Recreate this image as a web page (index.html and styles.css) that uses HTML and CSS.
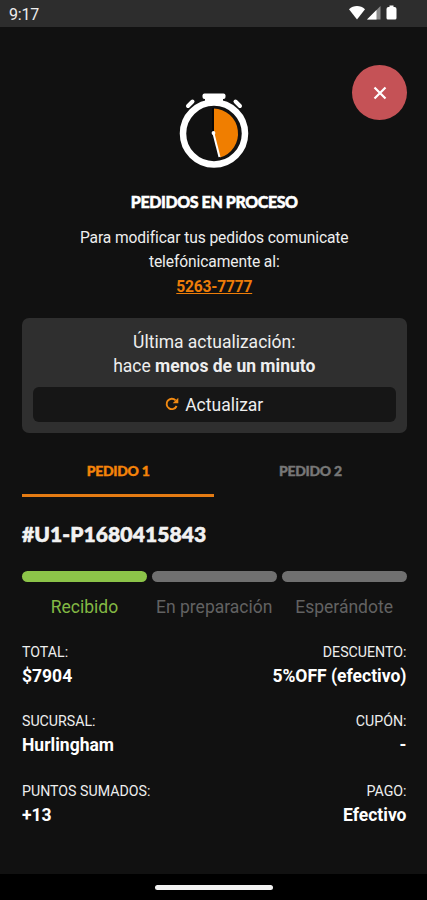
FILE: index.html
```html
<!DOCTYPE html>
<html lang="es">
<head>
<meta charset="utf-8">
<meta name="viewport" content="width=device-width, initial-scale=1">
<title>Pedidos en proceso</title>
<link rel="stylesheet" href="styles.css">
</head>
<body>
<div class="screen">
  <header class="status">
    <span class="clock">9:17</span>
    <svg class="status-icons" width="52" height="18" viewBox="0 0 52 18" aria-hidden="true">
      <path d="M1 5.200C5.500 1 12.500 1 17 5.200L9 15.500Z" fill="#fff"/>
      <path d="M19 15.500L32.500 2V15.500Z" fill="#8b8b8b"/>
      <path d="M19 15.500L28.500 6V15.500Z" fill="#fff"/>
      <path d="M41.500 1.500h4v1.500h1a2 2 0 0 1 2 2v9a1.500 1.500 0 0 1-1.500 1.500h-7a1.500 1.500 0 0 1-1.500-1.500v-9a2 2 0 0 1 2-2h1z" fill="#fff"/>
    </svg>
  </header>
  <main class="content">
    <button class="close" aria-label="Cerrar">
      <svg width="14" height="14" viewBox="0 0 14 14"><path d="M1.500 1.500L12.500 12.500M12.500 1.500L1.500 12.500" stroke="#fff" stroke-width="2.200"/></svg>
    </button>
    <svg class="timer" width="72" height="76" viewBox="0 0 72 76" aria-hidden="true">
      <rect x="24.500" y="1.500" width="23" height="5.500" rx="2" fill="#fff"/>
      <path d="M27 5h18v5H27z" fill="#fff"/>
      <path d="M10 14L14.500 9.500M62 14L57.500 9.500" stroke="#fff" stroke-width="4" stroke-linecap="round"/>
      <circle cx="36" cy="41.500" r="31" fill="#111" stroke="#fff" stroke-width="6.500"/>
      <path d="M35.500 41.500V16.500A25 25 0 0 1 42 65.500Z" fill="#f07e00"/>
      <path d="M35 41V16" stroke="#050505" stroke-width="2"/>
      <path d="M35.500 41.500L41.500 65" stroke="#fff" stroke-width="2"/>
      <circle cx="35.500" cy="41" r="1.900" fill="#fff"/>
    </svg>
    <h1 class="title">PEDIDOS EN PROCESO</h1>
    <p class="help">Para modificar tus pedidos comunicate<br>telefónicamente al:<br><a class="phone" href="tel:52637777">5263-7777</a></p>
    <section class="update">
      <p class="updated">Última actualización:<br>hace <b>menos de un minuto</b></p>
      <button class="refresh">
        <svg width="14" height="14" viewBox="0 0 14 14"><path d="M11.600 9A5.200 5.200 0 1 1 10.600 3.300" fill="none" stroke="#f28a12" stroke-width="1.900"/><path d="M13.300 .7V6.300H7.700Z" fill="#f28a12"/></svg>
        <span>Actualizar</span>
      </button>
    </section>
    <nav class="tabs">
      <span class="tab active">PEDIDO 1</span>
      <span class="tab">PEDIDO 2</span>
    </nav>
    <h2 class="order">#U1-P1680415843</h2>
    <div class="steps">
      <div class="step done">Recibido</div>
      <div class="step">En preparación</div>
      <div class="step">Esperándote</div>
    </div>
    <dl class="details">
      <div class="item"><dt>TOTAL:</dt><dd>$7904</dd></div>
      <div class="item right"><dt>DESCUENTO:</dt><dd>5%OFF (efectivo)</dd></div>
      <div class="item"><dt>SUCURSAL:</dt><dd>Hurlingham</dd></div>
      <div class="item right"><dt>CUPÓN:</dt><dd>-</dd></div>
      <div class="item"><dt>PUNTOS SUMADOS:</dt><dd>+13</dd></div>
      <div class="item right"><dt>PAGO:</dt><dd>Efectivo</dd></div>
    </dl>
  </main>
  <footer class="navbar"><span class="handle"></span></footer>
</div>
</body>
</html>
```
FILE: styles.css
```css
* { box-sizing: border-box; }
body, h1, h2, p, dl, dd { margin: 0; }
body { background: #111; color: #eee; font-family: Roboto, "Liberation Sans", sans-serif; }
button { border: 0; padding: 0; font: inherit; color: inherit; }
.screen { width: 427px; height: 900px; display: flex; flex-direction: column; overflow: hidden; }
.status { height: 27px; flex: none; background: #2d2d2d; display: flex; justify-content: space-between; align-items: center; padding: 0 27px 0 9px; }
.clock { font-size: 16px; line-height: 27px; padding-top: 1px; letter-spacing: -0.2px; }
.status-icons { margin-top: -1px; }
.content { position: relative; flex: 1; display: flex; flex-direction: column; padding: 65px 20.5px 0 22px; }
.close { position: absolute; top: 38px; right: 20px; width: 55px; height: 55px; border-radius: 50%; background: #c55256; display: grid; place-items: center; }
.timer { align-self: center; margin-right: 1px; flex: none; }
.title { margin-top: 22px; text-align: center; font: 900 16px/24px Lato, sans-serif; letter-spacing: -0.4px; color: #fff; -webkit-text-stroke: 0.5px currentColor; }
.help { margin-top: 12px; text-align: center; font-size: 15.6px; line-height: 24.3px; letter-spacing: -0.1px; }
.phone { color: #ed7d09; font-weight: 700; letter-spacing: -0.2px; text-underline-offset: 1px; }
.update { margin-top: 19px; height: 115px; background: #2f2f2f; border-radius: 7px; padding: 12px 11px 11px; }
.updated { text-align: center; font-size: 17.5px; line-height: 24px; }
.refresh { margin-top: 9px; width: 100%; height: 35px; border-radius: 6px; background: #161616; display: flex; align-items: center; justify-content: center; gap: 6px; font-size: 17.5px; line-height: 35px; }
.refresh span { padding-top: 2px; }
.tabs { margin-top: 12px; display: grid; grid-template-columns: 1fr 1fr; }
.tab { height: 52px; padding-top: 14px; text-align: center; font: 900 14px/24px Lato, sans-serif; letter-spacing: -0.3px; color: #777; border-bottom: 3px solid transparent; -webkit-text-stroke: 0.4px currentColor; }
.tab.active { color: #f58409; border-color: #e47b13; }
.order { margin-top: 21px; font: 900 21px/32px Lato, sans-serif; letter-spacing: 0.1px; color: #f2f2f2; -webkit-text-stroke: 0.6px currentColor; }
.steps { margin-top: 21px; display: grid; grid-template-columns: repeat(3, 1fr); gap: 5px; }
.step { text-align: center; color: #626262; font-size: 17.5px; line-height: 24px; white-space: nowrap; }
.step::before { content: ""; display: block; height: 11px; border-radius: 6px; background: #707070; margin-bottom: 13px; }
.step.done { color: #83b944; }
.step.done::before { background: #8cc449; }
.details { margin-top: 21px; display: grid; grid-template-columns: 1fr 1fr; row-gap: 20px; }
.item { white-space: nowrap; }
.right { text-align: right; }
.item dt { font-size: 14.2px; line-height: 24px; }
.item dd { font-size: 17.5px; line-height: 25.500px; font-weight: 700; color: #fff; }
.navbar { height: 26px; flex: none; background: #000; display: grid; place-items: center; }
.handle { width: 118px; height: 5px; border-radius: 3px; background: #f2f2f2; }
```
